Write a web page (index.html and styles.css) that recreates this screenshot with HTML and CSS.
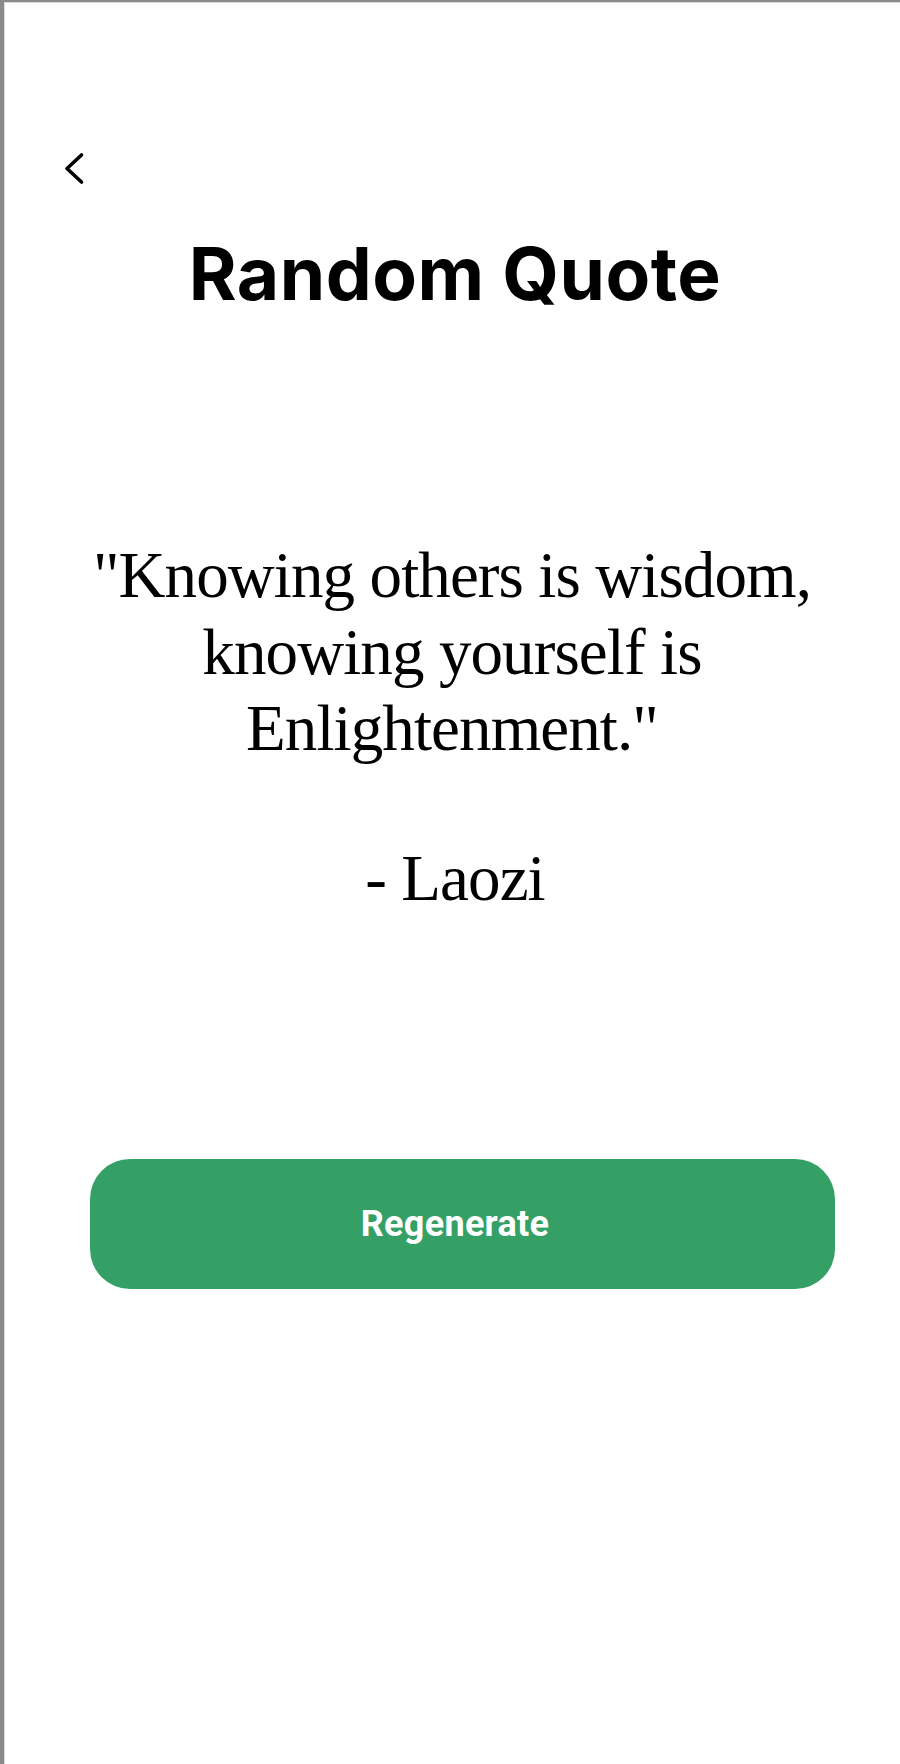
FILE: index.html
```html
<!DOCTYPE html>
<html lang="en">
<head>
<meta charset="utf-8">
<title>Random Quote</title>
<link rel="stylesheet" href="styles.css">
</head>
<body>
<div class="screen">
  <header class="topbar">
    <button class="back" aria-label="Back">
      <svg width="22" height="34" viewBox="0 0 22 34"><path d="M18.5 4 L4 17.5 L18.5 31" fill="none" stroke="#000" stroke-width="3.6" stroke-linecap="round" stroke-linejoin="round"/></svg>
    </button>
  </header>
  <h1 class="title">Random Quote</h1>
  <blockquote class="quote">
    <p class="quote-text">"Knowing others is wisdom, knowing yourself is Enlightenment."</p>
    <p class="author">- Laozi</p>
  </blockquote>
  <button class="regen">Regenerate</button>
</div>
</body>
</html>
```
FILE: styles.css
```css
html, body {
  margin: 0;
  padding: 0;
  background: #ffffff;
}
.screen {
  box-sizing: border-box;
  min-height: 1764px;
  border-left: 4px solid #8a8a8a;
  border-top: 2px solid #8a8a8a;
  box-shadow: inset 1px 1px 0 #dcdcdc;
  padding-top: 149px;
  display: flex;
  flex-direction: column;
}
.topbar {
  padding-left: 59px;
  height: 34px;
}
.back {
  background: none;
  border: 0;
  padding: 0;
  margin: 0;
  display: block;
  width: 22px;
  height: 34px;
}
.back svg { display: block; }
.title {
  margin: 53px 0 0;
  font-family: Inter, "Noto Sans", sans-serif;
  font-weight: 700;
  font-size: 73px;
  line-height: 71px;
  text-align: center;
  color: #000;
  letter-spacing: 0.5px;
  padding-left: 6px;
}
.quote {
  margin: 228px auto 0;
  width: 760px;
  font-family: "Liberation Serif", "DejaVu Serif", serif;
  font-size: 65px;
  line-height: 76.5px;
  color: #000;
  text-align: center;
  letter-spacing: -0.9px;
}
.quote-text { margin: 0; }
.author { margin: 73.5px 0 0; padding-left: 6px; }
.regen {
  margin: 242px 0 0 86px;
  width: 745px;
  height: 130px;
  border: 0;
  border-radius: 40px;
  background: #34a065;
  color: #fff;
  font-family: Roboto, "Liberation Sans", sans-serif;
  font-weight: 700;
  font-size: 36px;
  letter-spacing: 0.3px;
  padding: 0 15px 0 0;
  cursor: pointer;
}
```
